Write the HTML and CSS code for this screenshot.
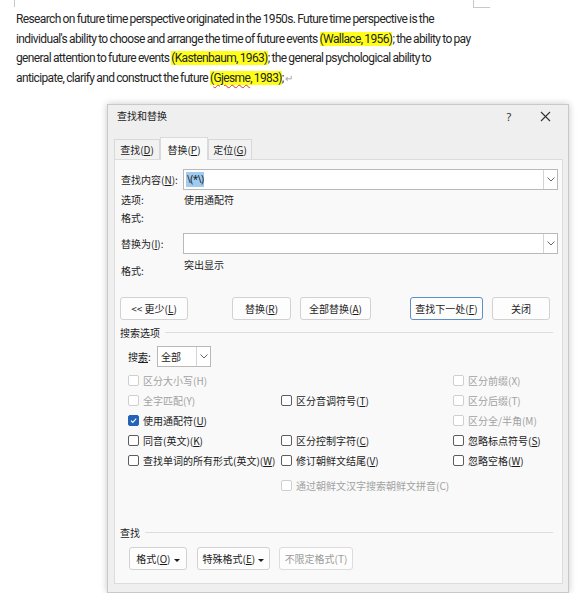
FILE: index.html
```html
<!DOCTYPE html>
<html>

<head>
    <meta charset="UTF-8">
    <title>查找和替换</title>
    <link rel="stylesheet" href="styles.css">
</head>

<body>
    <div class="page-marks">
        <span class="mark-left"></span>
        <span class="mark-right"></span>
    </div>
    <p class="doc-text">
        Research on future time perspective originated in the 1950s. Future time perspective is the<br>
        individual's ability to choose and arrange the time of future events <mark>(Wallace, 1956)</mark>; the ability to pay<br>
        general attention to future events <mark>(Kastenbaum, 1963)</mark>; the general psychological ability to<br>
        anticipate, clarify and construct the future <mark>(<span class="misspelt">Gjesme</span>, 1983)</mark>;<span class="para-mark">↵</span>
    </p>

    <div class="dialog">
        <div class="title-bar">
            <span class="title">查找和替换</span>
            <span class="title-btn help">?</span>
            <span class="title-btn close">
                <svg width="11" height="11" viewBox="0 0 11 11"><path d="M1 1L10 10M10 1L1 10" stroke="#333" stroke-width="1.1" fill="none"/></svg>
            </span>
        </div>

        <div class="tabs">
            <span class="tab tab-find">查找(<u>D</u>)</span>
            <span class="tab tab-replace active">替换(<u>P</u>)</span>
            <span class="tab tab-goto">定位(<u>G</u>)</span>
        </div>

        <div class="panel">
            <div class="field-row">
                <label class="field-label">查找内容(<u>N</u>):</label>
                <div class="combo">
                    <span class="combo-text"><span class="selected">\(*\)</span></span>
                    <span class="combo-arrow">
                        <svg width="8" height="5" viewBox="0 0 8 5"><path d="M0.5 0.5L4 4L7.5 0.5" stroke="#666" fill="none"/></svg>
                    </span>
                </div>
            </div>
            <div class="info-row">
                <span class="info-label">选项:</span>
                <span class="info-value">使用通配符</span>
            </div>
            <div class="info-row">
                <span class="info-label">格式:</span>
                <span class="info-value"></span>
            </div>

            <div class="field-row replace-row">
                <label class="field-label">替换为(<u>I</u>):</label>
                <div class="combo">
                    <span class="combo-text"></span>
                    <span class="combo-arrow">
                        <svg width="8" height="5" viewBox="0 0 8 5"><path d="M0.5 0.5L4 4L7.5 0.5" stroke="#666" fill="none"/></svg>
                    </span>
                </div>
            </div>
            <div class="info-row format-row">
                <span class="info-label">格式:</span>
                <span class="info-value">突出显示</span>
            </div>

            <div class="button-row">
                <button type="button" class="btn btn-less">&lt;&lt; 更少(<u>L</u>)</button>
                <button type="button" class="btn btn-replace">替换(<u>R</u>)</button>
                <button type="button" class="btn btn-replace-all">全部替换(<u>A</u>)</button>
                <button type="button" class="btn btn-next focused">查找下一处(<u>F</u>)</button>
                <button type="button" class="btn btn-close">关闭</button>
            </div>

            <div class="section-head">搜索选项</div>

            <div class="search-row">
                <label class="search-label">搜<u>索</u>:</label>
                <div class="select">
                    <span class="select-text">全部</span>
                    <span class="combo-arrow">
                        <svg width="8" height="5" viewBox="0 0 8 5"><path d="M0.5 0.5L4 4L7.5 0.5" stroke="#666" fill="none"/></svg>
                    </span>
                </div>
            </div>

            <div class="options">
                <span class="opt disabled"><i class="box"></i>区分大小写(H)</span>
                <span></span>
                <span class="opt disabled"><i class="box"></i>区分前缀(X)</span>

                <span class="opt disabled"><i class="box"></i>全字匹配(Y)</span>
                <span class="opt"><i class="box"></i>区分音调符号(<u>T</u>)</span>
                <span class="opt disabled"><i class="box"></i>区分后缀(T)</span>

                <span class="opt"><i class="box checked">
                    <svg width="9" height="9" viewBox="0 0 9 9"><path d="M2 4.6L3.8 6.4L7.2 2.6" stroke="#fff" stroke-width="1.1" fill="none"/></svg>
                </i>使用通配符(<u>U</u>)</span>
                <span></span>
                <span class="opt disabled"><i class="box"></i>区分全/半角(M)</span>

                <span class="opt"><i class="box"></i>同音(英文)(<u>K</u>)</span>
                <span class="opt"><i class="box"></i>区分控制字符(<u>C</u>)</span>
                <span class="opt"><i class="box"></i>忽略标点符号(<u>S</u>)</span>

                <span class="opt"><i class="box"></i>查找单词的所有形式(英文)(<u>W</u>)</span>
                <span class="opt"><i class="box"></i>修订朝鲜文结尾(<u>V</u>)</span>
                <span class="opt"><i class="box"></i>忽略空格(<u>W</u>)</span>

                <span></span>
                <span class="opt disabled hangul"><i class="box"></i>通过朝鲜文汉字搜索朝鲜文拼音(C)</span>
                <span></span>
            </div>

            <div class="section-head find-head">查找</div>

            <div class="button-row bottom-row">
                <button type="button" class="btn btn-format">格式(<u>O</u>) <i class="caret"></i></button>
                <button type="button" class="btn btn-special">特殊格式(<u>E</u>) <i class="caret"></i></button>
                <button type="button" class="btn btn-noformat" disabled>不限定格式(T)</button>
            </div>
        </div>
    </div>
</body>

</html>
```

FILE: styles.css
```css
body {
    margin: 0;
    background-color: #ffffff;
    font-family: Roboto, "Noto Sans", sans-serif;
}

/* page corner marks of the document */
.page-marks {
    display: flex;
    justify-content: space-between;
    height: 7px;
    padding: 0 87px 0 14px;
}

.mark-left {
    width: 1px;
    height: 7px;
    background-color: #c8c8c8;
}

.mark-right {
    width: 16px;
    height: 7px;
    border-left: 1px solid #c8c8c8;
    border-bottom: 1px solid #c8c8c8;
}

.doc-text {
    margin: 3px 0 0 16px;
    font-size: 12px;
    line-height: 19.5px;
    letter-spacing: -0.62px;
    word-spacing: -0.5px;
    color: #252525;
}

.doc-text mark {
    background-color: #ffff1a;
    color: #252525;
}

.misspelt {
    text-decoration: underline wavy #e0302a;
    text-decoration-thickness: 1px;
    text-underline-offset: 2px;
}

.para-mark {
    color: #a0a0a0;
    font-size: 10px;
    margin-left: 1px;
}

/* dialog */
.dialog {
    width: 449px;
    height: 487px;
    margin: 16px 0 0 107px;
    padding: 0 5px 0 6px;
    border: 1px solid #c9c9c9;
    background-color: #efefef;
    box-shadow: 0 0 7px rgba(0, 0, 0, 0.22);
    font-family: "Noto Sans CJK SC", sans-serif;
    font-size: 10px;
    color: #1c1c1c;
}

.dialog u {
    text-underline-offset: 1px;
}

.title-bar {
    display: flex;
    align-items: flex-start;
    height: 32px;
    padding-top: 4px;
    box-sizing: border-box;
}

.title {
    flex: 1;
    margin-left: 3px;
    line-height: 14px;
}

.title-btn {
    display: flex;
    justify-content: center;
    align-items: center;
    height: 15px;
    font-family: "Noto Sans", sans-serif;
    font-size: 11px;
    color: #333;
}

.help {
    width: 14px;
    margin-right: 22px;
}

.close {
    width: 14px;
    margin-right: 11px;
}

.tabs {
    display: flex;
    align-items: flex-end;
    height: 22px;
}

.tab {
    display: flex;
    justify-content: center;
    align-items: center;
    height: 20px;
    box-sizing: border-box;
    border: 1px solid #d8d8d8;
    border-bottom: none;
    background-color: #f2f2f2;
}

.tab-find {
    width: 46px;
}

.tab-replace {
    width: 48px;
}

.tab-goto {
    width: 44px;
}

.tab.active {
    position: relative;
    height: 23px;
    margin-bottom: -1px;
    background-color: #f9f9f9;
    border-color: #dadada;
}

.panel {
    height: 425px;
    box-sizing: border-box;
    padding: 9px 4px 0 6px;
    border: 1px solid #dcdcdc;
    background-color: #f9f9f9;
}

.field-row {
    display: flex;
    align-items: center;
    height: 21px;
}

.field-label {
    width: 62px;
}

.combo,
.select {
    display: flex;
    height: 21px;
    box-sizing: border-box;
    border: 1px solid #b9b9b9;
    background-color: #ffffff;
}

.combo {
    flex: 1;
}

.combo-text {
    flex: 1;
    display: flex;
    align-items: center;
    padding-left: 2px;
}

.selected {
    background-color: #9fcbf0;
    padding: 0 1px;
    line-height: 15px;
    font-family: "Noto Sans", sans-serif;
    font-size: 10px;
    letter-spacing: -0.5px;
}

.combo-arrow {
    display: flex;
    justify-content: center;
    align-items: center;
    width: 13px;
    border-left: 1px solid #d4d4d4;
}

.info-row {
    display: flex;
    align-items: center;
    height: 18px;
}

.info-label {
    width: 63px;
}

.replace-row {
    margin-top: 7px;
}

.format-row {
    height: 25px;
    align-items: flex-start;
}

.format-row .info-label {
    padding-top: 9px;
}

.format-row .info-value {
    padding-top: 3px;
}

.button-row {
    display: flex;
    height: 23px;
    margin-top: 18px;
}

.btn {
    height: 23px;
    padding: 0;
    box-sizing: border-box;
    border: 1px solid #d2d2d2;
    border-radius: 3px;
    background-color: #fdfdfd;
    font-family: "Noto Sans CJK SC", sans-serif;
    font-size: 10px;
    color: #1c1c1c;
}

.btn-less {
    width: 68px;
    margin-left: -1px;
}

.btn-replace {
    width: 59px;
    margin-left: 44px;
}

.btn-replace-all {
    width: 71px;
    margin-left: 9px;
}

.btn-next {
    width: 73px;
    margin-left: 39px;
}

.btn-close {
    width: 58px;
    margin-left: 9px;
}

.btn.focused {
    border-color: #5b8fc7;
}

.section-head {
    display: flex;
    align-items: center;
    height: 16px;
    margin: 4px 5px 0 -1px;
}

.section-head::after {
    content: "";
    flex: 1;
    height: 1px;
    margin-left: 5px;
    background-color: #dedede;
}

.search-row {
    display: flex;
    align-items: center;
    height: 21px;
    margin-top: 6px;
    padding-left: 7px;
}

.search-label {
    width: 29px;
}

.select {
    width: 54px;
}

.select-text {
    flex: 1;
    display: flex;
    align-items: center;
    padding-left: 3px;
}

.options {
    display: grid;
    grid-template-columns: 153px 172px 1fr;
    grid-template-rows: repeat(5, 20px) 20px;
    margin-top: 3px;
    padding-left: 7px;
}

.opt {
    display: flex;
    align-items: center;
    white-space: nowrap;
}

.opt.hangul {
    margin-top: 11px;
}

.opt.disabled {
    color: #a2a2a2;
}

.box {
    display: flex;
    justify-content: center;
    align-items: center;
    width: 11px;
    height: 11px;
    box-sizing: border-box;
    margin-right: 4px;
    border: 1px solid #5c5c5c;
    border-radius: 2px;
    background-color: #ffffff;
}

.opt.disabled .box {
    border-color: #cfcfcf;
}

.box.checked {
    border-color: #2263b8;
    background-color: #2263b8;
}

.find-head {
    margin-top: 34px;
}

.bottom-row {
    margin-top: 7px;
}

.btn-format {
    width: 58px;
    margin-left: 8px;
}

.btn-special {
    width: 73px;
    margin-left: 10px;
}

.btn-noformat {
    width: 74px;
    margin-left: 9px;
    border-color: #dcdcdc;
    color: #9a9a9a;
}

.caret {
    display: inline-block;
    width: 0;
    height: 0;
    margin-left: 1px;
    vertical-align: middle;
    border-left: 3px solid transparent;
    border-right: 3px solid transparent;
    border-top: 3px solid #1c1c1c;
}
```
